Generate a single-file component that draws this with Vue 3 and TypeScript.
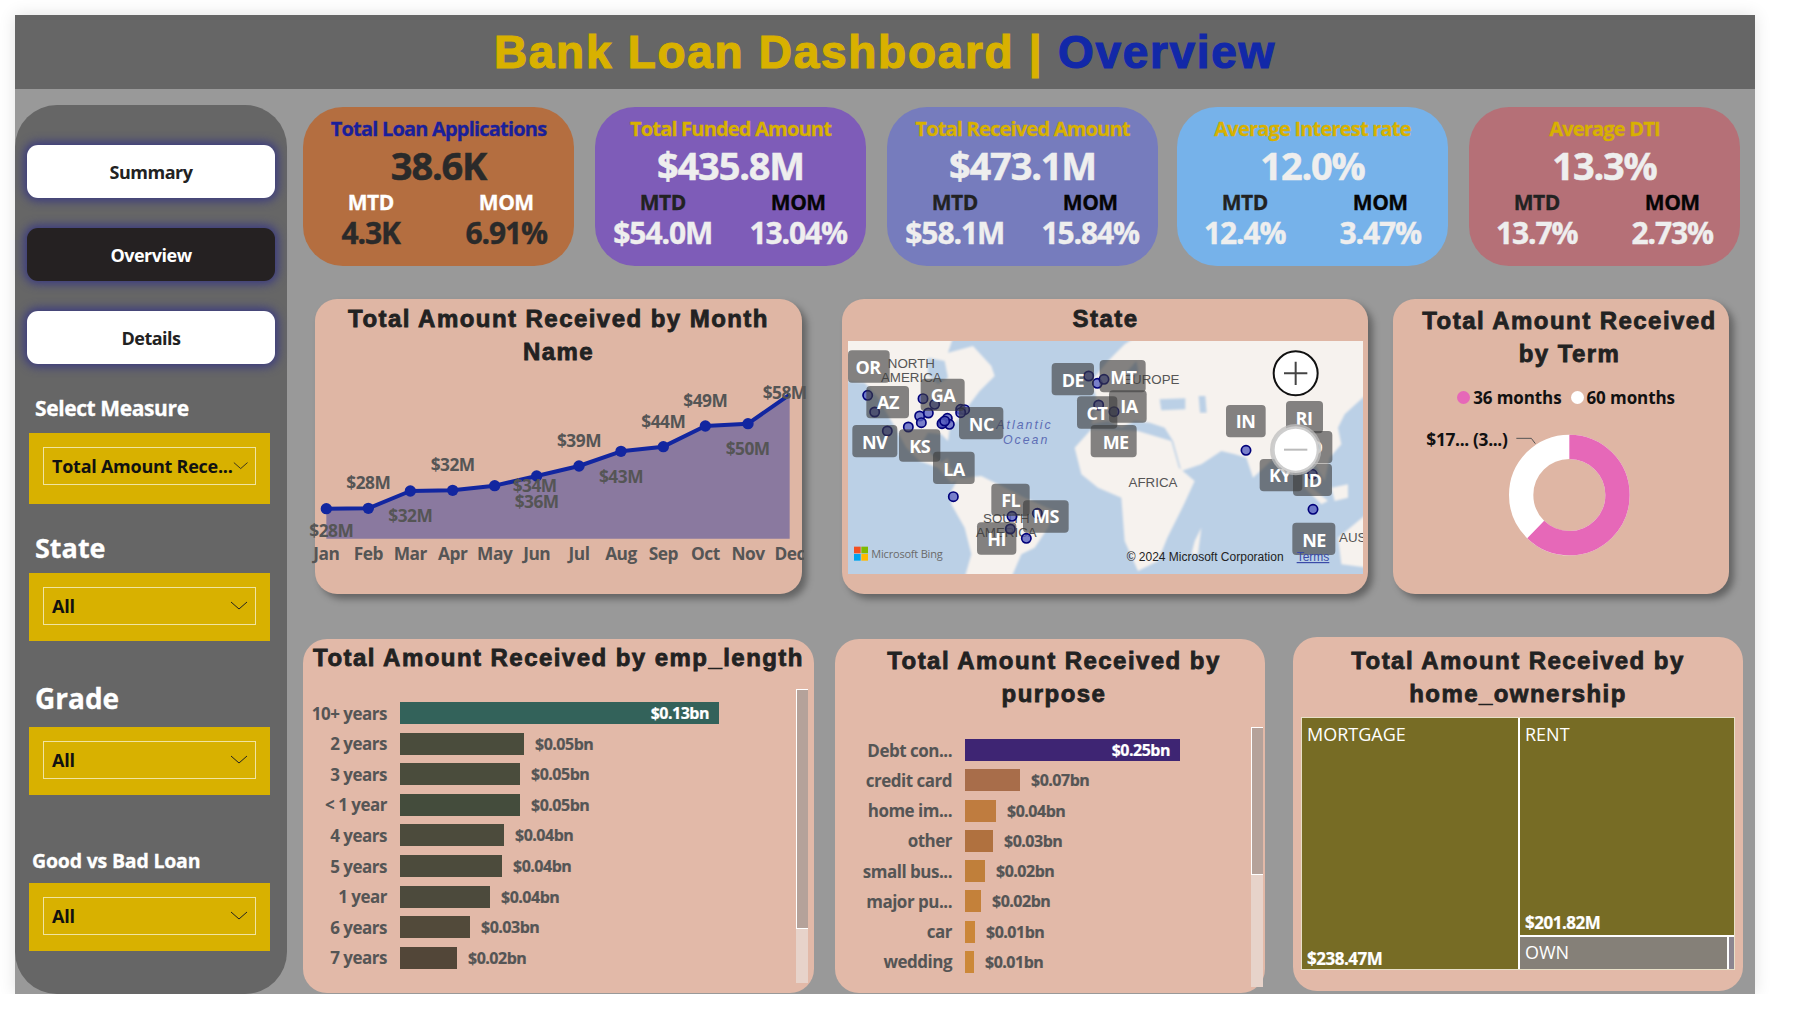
<template>
  <div class="dash">
    <header class="topbar">
      <h1><span class="gold">Bank Loan Dashboard | </span><span class="blue">Overview</span></h1>
    </header>

    <div class="body">
      <aside class="side">
        <button class="nav">Summary</button>
        <button class="nav active">Overview</button>
        <button class="nav">Details</button>

        <div v-for="s in slicers" :key="s.label" class="slicer-wrap" :class="s.cls">
          <div class="slicer-label">{{ s.label }}</div>
          <div class="slicer">
            <div class="slicer-box">
              <span>{{ s.value }}</span>
              <svg width="18" height="10" viewBox="0 0 18 10"><path d="M1 1l8 7 8-7" fill="none" stroke="#222" stroke-width="1" /></svg>
            </div>
          </div>
        </div>
      </aside>

      <main class="content">
        <section class="kpis">
          <div v-for="k in kpis" :key="k.title" class="kpi" :class="k.cls">
            <div class="kpi-title">{{ k.title }}</div>
            <div class="kpi-value">{{ k.value }}</div>
            <div class="kpi-cols">
              <span class="kpi-mtd">MTD</span>
              <span class="kpi-mom">MOM</span>
              <span class="kpi-num">{{ k.mtd }}</span>
              <span class="kpi-num">{{ k.mom }}</span>
            </div>
          </div>
        </section>

        <section class="row-mid">
          <div class="card month-card">
            <h2>Total Amount Received by Month Name</h2>
            <svg class="line-chart" viewBox="46 244 1461 669" width="487" height="223">
              <defs>
                <clipPath id="axisClip"><rect x="0" y="740" width="1513" height="120" /></clipPath>
              </defs>
              <polygon :points="areaPoints" fill="#8a799f" />
              <polyline :points="linePoints" fill="none" stroke="#1226a0" stroke-width="12" stroke-linejoin="round" />
              <circle v-for="p in monthPoints.slice(0, 11)" :key="p.m" :cx="p.x" :cy="p.y" r="17" fill="#1226a0" />
              <text v-for="l in monthLabels" :key="l.x + l.t" :x="l.x" :y="l.y + 17" class="chart-text">{{ l.t }}</text>
              <g clip-path="url(#axisClip)">
                <text v-for="p in monthPoints" :key="p.m" :x="p.x" y="812" class="chart-text">{{ p.m }}</text>
              </g>
            </svg>
          </div>

          <div class="card map-card">
            <h2>State</h2>
            <svg class="map" viewBox="0 0 1545 699" width="515" height="233">
              <defs>
                <filter id="soft" x="-2%" y="-2%" width="104%" height="104%"><feGaussianBlur stdDeviation="2.5" /></filter>
              </defs>
              <rect width="1545" height="699" fill="#bbd0e6" />
              <g fill="#f6f2ee" filter="url(#soft)">
                <path d="M-10 -10L315 -10L300 35L375 15L430 75L440 105L395 150L365 190L335 230L305 265L300 300L280 280L240 275L225 300L250 340L280 365L300 350L305 380L330 400L340 412L310 425L270 380L215 360L175 320L130 240L90 170L50 125L-10 120Z" />
                <path d="M330 412L400 405L450 430L530 470L620 510L600 560L560 620L520 640L490 710L350 710L370 640L350 560L310 490L310 450Z" />
                <path d="M680 320L730 265L870 270L970 300L993 380L1040 420L1008 490L958 590L930 660L870 690L830 600L820 470L750 440L700 400Z" />
                <path d="M745 170L730 120L780 60L830 10L860 -10L1555 -10L1555 160L1490 220L1470 260L1480 310L1445 350L1430 420L1400 370L1370 360L1330 370L1280 350L1215 410L1195 350L1160 340L1120 330L1060 370L1000 390L975 300L950 260L905 245L860 240L820 260L780 240L730 250L745 200Z" />
                <path d="M1380 430L1440 480L1420 490L1370 440Z" />
                <path d="M1450 440L1500 430L1500 470L1460 480Z" />
                <path d="M1470 590L1555 520L1555 680L1480 670Z" />
                <path d="M1040 600L1060 560L1050 640L1030 640Z" />
              </g>
              <g fill="#bbd0e6" filter="url(#soft)">
                <path d="M240 50L290 60L300 110L270 130L240 100Z" />
                <path d="M935 175L1012 172L1012 205L940 208Z" />
                <path d="M1052 165L1072 165L1076 215L1056 215Z" />
                <path d="M835 95L865 60L872 95L850 122Z" />
              </g>

              <text x="190" y="81" class="geo">NORTH</text>
              <text x="190" y="124" class="geo">AMERICA</text>
              <text x="910" y="129" class="geo">EUROPE</text>
              <text x="915" y="439" class="geo">AFRICA</text>
              <text x="475" y="546" class="geo">SOUTH</text>
              <text x="475" y="589" class="geo">AMERICA</text>
              <text x="1473" y="604" class="geo geo-start">AUS</text>
              <text x="445" y="264" class="ocean">Atlantic</text>
              <text x="465" y="309" class="ocean">Ocean</text>

              <circle v-for="(d, i) in dots" :key="i" :cx="d[0]" :cy="d[1]" r="14" fill="#5a62c0" fill-opacity=".8" stroke="#00007a" stroke-width="5" />

              <g v-for="t in tags" :key="t.s">
                <rect :x="t.x" :y="t.y" :width="t.w" height="97" rx="12" fill="#3c3c3c" fill-opacity=".62" />
                <text :x="t.tx" :y="t.ty + 19" class="tag-text">{{ t.s }}</text>
              </g>

              <circle cx="1343" cy="97" r="66" fill="#fff" stroke="#111" stroke-width="6" />
              <path d="M1308 97h70M1343 62v70" stroke="#444" stroke-width="6" fill="none" />
              <circle cx="1343" cy="326" r="70" fill="#fff" stroke="#bdbdbd" stroke-opacity=".75" stroke-width="14" />
              <path d="M1308 326h70" stroke="#bbb" stroke-width="6" fill="none" />

              <rect x="18" y="617" width="20" height="20" fill="#f25022" />
              <rect x="40" y="617" width="20" height="20" fill="#7fba00" />
              <rect x="18" y="639" width="20" height="20" fill="#00a4ef" />
              <rect x="40" y="639" width="20" height="20" fill="#ffb900" />
              <text x="70" y="652" class="bing">Microsoft Bing</text>
              <text x="836" y="660" class="copy">© 2024 Microsoft Corporation</text>
              <text x="1346" y="660" class="terms">Terms</text>
            </svg>
          </div>

          <div class="card term-card">
            <h2>Total Amount Received by Term</h2>
            <div class="legend">
              <span class="dot pink"></span><span>36 months</span>
              <span class="dot white"></span><span>60 months</span>
            </div>
            <svg class="donut" viewBox="40 400 1008 513" width="336" height="171">
              <circle cx="569" cy="616" r="144.5" fill="none" stroke="#fff" stroke-width="73" />
              <circle cx="569" cy="616" r="144.5" fill="none" stroke="#e668b8" stroke-width="73" pathLength="360" stroke-dasharray="224 136" transform="rotate(-90 569 616)" />
              <path d="M410 446h45l12 16" fill="none" stroke="#555" stroke-width="3" />
              <text x="140" y="470" class="donut-label">$17... (3...)</text>
            </svg>
          </div>
        </section>

        <section class="row-bottom">
          <div class="card light emp-card">
            <h2>Total Amount Received by emp_length</h2>
            <div class="bars">
              <div v-for="b in empBars" :key="b.label" class="bar-row">
                <span class="bar-label">{{ b.label }}</span>
                <div class="bar" :style="{ width: b.w + 'px', background: b.c }">
                  <span v-if="b.inside" class="bar-in">{{ b.v }}</span>
                </div>
                <span v-if="!b.inside" class="bar-val">{{ b.v }}</span>
              </div>
            </div>
            <div class="scroll"><div class="thumb"></div></div>
          </div>

          <div class="card light purpose-card">
            <h2>Total Amount Received by purpose</h2>
            <div class="bars">
              <div v-for="b in purposeBars" :key="b.label" class="bar-row">
                <span class="bar-label">{{ b.label }}</span>
                <div class="bar" :style="{ width: b.w + 'px', background: b.c }">
                  <span v-if="b.inside" class="bar-in">{{ b.v }}</span>
                </div>
                <span v-if="!b.inside" class="bar-val">{{ b.v }}</span>
              </div>
            </div>
            <div class="scroll"><div class="thumb"></div></div>
          </div>

          <div class="card light home-card">
            <h2>Total Amount Received by home_ownership</h2>
            <div class="treemap">
              <div class="cell mortgage">
                <span>MORTGAGE</span>
                <b>$238.47M</b>
              </div>
              <div class="tree-right">
                <div class="cell rent">
                  <span>RENT</span>
                  <b>$201.82M</b>
                </div>
                <div class="tree-low">
                  <div class="cell own"><span>OWN</span></div>
                  <div class="cell sliver"></div>
                </div>
              </div>
            </div>
          </div>
        </section>
      </main>
    </div>
  </div>
</template>

<script setup lang="ts">
const slicers = [
  { label: 'Select Measure', value: 'Total Amount Rece...', cls: 'measure' },
  { label: 'State', value: 'All', cls: 'state' },
  { label: 'Grade', value: 'All', cls: 'grade' },
  { label: 'Good vs Bad Loan', value: 'All', cls: 'good' },
]

const kpis = [
  { title: 'Total Loan Applications', value: '38.6K', mtd: '4.3K', mom: '6.91%', cls: 'k1' },
  { title: 'Total Funded Amount', value: '$435.8M', mtd: '$54.0M', mom: '13.04%', cls: 'k2' },
  { title: 'Total Received Amount', value: '$473.1M', mtd: '$58.1M', mom: '15.84%', cls: 'k3' },
  { title: 'Average Interest rate', value: '12.0%', mtd: '12.4%', mom: '3.47%', cls: 'k4' },
  { title: 'Average DTI', value: '13.3%', mtd: '13.7%', mom: '2.73%', cls: 'k5' },
]

const monthPoints = [
  { m: 'Jan', x: 80, y: 657 },
  { m: 'Feb', x: 206, y: 656 },
  { m: 'Mar', x: 332, y: 604 },
  { m: 'Apr', x: 459, y: 602 },
  { m: 'May', x: 585, y: 588 },
  { m: 'Jun', x: 711, y: 559 },
  { m: 'Jul', x: 838, y: 529 },
  { m: 'Aug', x: 964, y: 485 },
  { m: 'Sep', x: 1091, y: 471 },
  { m: 'Oct', x: 1217, y: 409 },
  { m: 'Nov', x: 1345, y: 402 },
  { m: 'Dec', x: 1470, y: 315 },
]
const linePoints = monthPoints.map(p => `${p.x},${p.y}`).join(' ')
const areaPoints = `80,747 ${linePoints} 1470,747`

const monthLabels = [
  { t: '$28M', x: 95, y: 724 },
  { t: '$28M', x: 206, y: 580 },
  { t: '$32M', x: 332, y: 679 },
  { t: '$32M', x: 459, y: 526 },
  { t: '$34M', x: 705, y: 589 },
  { t: '$36M', x: 711, y: 637 },
  { t: '$39M', x: 838, y: 455 },
  { t: '$43M', x: 964, y: 562 },
  { t: '$44M', x: 1091, y: 397 },
  { t: '$49M', x: 1217, y: 334 },
  { t: '$50M', x: 1344, y: 478 },
  { t: '$58M', x: 1455, y: 311 },
]

const dots: [number, number][] = [
  [59, 163], [80, 213], [225, 173], [260, 190], [215, 225], [241, 216], [220, 245], [181, 258],
  [118, 270], [298, 232], [285, 245], [304, 250], [282, 248], [290, 240], [338, 205], [350, 206],
  [338, 215], [316, 467], [492, 526], [568, 517], [487, 564], [535, 592], [722, 105], [748, 127],
  [768, 115], [752, 192], [798, 212], [1194, 328], [1393, 400], [1395, 505],
]

const tags = [
  { s: 'OR', x: 0, y: 28, w: 125, tx: 60, ty: 80 },
  { s: 'AZ', x: 55, y: 135, w: 128, tx: 120, ty: 185 },
  { s: 'GA', x: 218, y: 113, w: 132, tx: 285, ty: 165 },
  { s: 'NC', x: 333, y: 198, w: 133, tx: 400, ty: 250 },
  { s: 'NV', x: 13, y: 252, w: 135, tx: 80, ty: 305 },
  { s: 'KS', x: 153, y: 265, w: 124, tx: 215, ty: 318 },
  { s: 'LA', x: 255, y: 332, w: 125, tx: 318, ty: 385 },
  { s: 'FL', x: 430, y: 428, w: 115, tx: 488, ty: 480 },
  { s: 'MS', x: 525, y: 478, w: 137, tx: 594, ty: 528 },
  { s: 'HI', x: 387, y: 544, w: 118, tx: 446, ty: 597 },
  { s: 'DE', x: 611, y: 66, w: 127, tx: 675, ty: 118 },
  { s: 'MT', x: 755, y: 57, w: 138, tx: 826, ty: 110 },
  { s: 'CT', x: 687, y: 166, w: 121, tx: 747, ty: 218 },
  { s: 'IA', x: 783, y: 148, w: 113, tx: 843, ty: 198 },
  { s: 'ME', x: 728, y: 252, w: 138, tx: 803, ty: 305 },
  { s: 'IN', x: 1134, y: 192, w: 119, tx: 1193, ty: 243 },
  { s: 'RI', x: 1314, y: 180, w: 111, tx: 1368, ty: 232 },
  { s: 'MD', x: 1370, y: 270, w: 83, tx: 1380, ty: 320 },
  { s: 'KY', x: 1235, y: 354, w: 128, tx: 1296, ty: 405 },
  { s: 'ID', x: 1335, y: 368, w: 117, tx: 1393, ty: 420 },
  { s: 'NE', x: 1333, y: 545, w: 129, tx: 1398, ty: 598 },
]

const empBars = [
  { label: '10+ years', w: 319, c: '#33625a', v: '$0.13bn', inside: true },
  { label: '2 years', w: 124, c: '#4a4c3c', v: '$0.05bn' },
  { label: '3 years', w: 120, c: '#4a4c3c', v: '$0.05bn' },
  { label: '< 1 year', w: 120, c: '#444c3c', v: '$0.05bn' },
  { label: '4 years', w: 104, c: '#4c4b3c', v: '$0.04bn' },
  { label: '5 years', w: 102, c: '#4c4b3c', v: '$0.04bn' },
  { label: '1 year', w: 90, c: '#4c4a3c', v: '$0.04bn' },
  { label: '6 years', w: 70, c: '#524a3a', v: '$0.03bn' },
  { label: '7 years', w: 57, c: '#524638', v: '$0.02bn' },
]

const purposeBars = [
  { label: 'Debt con...', w: 215, c: '#3e2573', v: '$0.25bn', inside: true },
  { label: 'credit card', w: 55, c: '#a86d4a', v: '$0.07bn' },
  { label: 'home im...', w: 31, c: '#bf7c3f', v: '$0.04bn' },
  { label: 'other', w: 28, c: '#b0713f', v: '$0.03bn' },
  { label: 'small bus...', w: 20, c: '#c07f3a', v: '$0.02bn' },
  { label: 'major pu...', w: 16, c: '#c4813a', v: '$0.02bn' },
  { label: 'car', w: 10, c: '#cb8638', v: '$0.01bn' },
  { label: 'wedding', w: 9, c: '#cc8838', v: '$0.01bn' },
]
</script>

<style>
html, body { background: #fff; }
</style>

<style scoped>
.dash {
  position: relative;
  margin: 15px 0 0 15px;
  width: 1740px;
  height: 979px;
  background: #999;
  box-shadow: 0 0 16px rgba(0, 0, 0, .12);
  font-family: "Open Sans", "Noto Sans", sans-serif;
  color: #222;
}

.topbar {
  height: 74px;
  background: #666;
  display: flex;
  align-items: center;
  justify-content: center;
}
.topbar h1 {
  margin: 0;
  font: 700 46px/1 "Liberation Sans", sans-serif;
  -webkit-text-stroke: 1.2px currentColor;
  letter-spacing: 1.7px;
  white-space: pre;
}
.gold { color: #d8b100; }
.blue { color: #1228a8; }

.body { display: flex; }

.side {
  width: 272px;
  height: 889px;
  margin-top: 16px;
  padding-top: 40px;
  box-sizing: border-box;
  background: #666;
  border-radius: 42px;
  flex: none;
}
.nav {
  display: block;
  width: 248px;
  height: 53px;
  margin: 0 0 30px 12px;
  border: 0;
  border-radius: 11px;
  background: #fff;
  color: #222;
  font: 700 18px "Open Sans", sans-serif;
  letter-spacing: -.5px;
  box-shadow: 0 0 10px 3px #3a3a80;
}
.nav.active { background: #252122; color: #fff; }

.slicer-label {
  color: #fff;
  font-weight: 700;
  padding-left: 20px;
  line-height: 40px;
  -webkit-text-stroke: .3px #fff;
}
.slicer {
  margin-left: 14px;
  width: 241px;
  height: 68px;
  padding: 14px;
  box-sizing: border-box;
  background: #d8b100;
}
.slicer-box {
  height: 38px;
  padding: 0 7px 0 8px;
  border: 1px solid #f0e4a0;
  box-sizing: border-box;
  display: flex;
  align-items: center;
  justify-content: space-between;
  color: #111;
  font-size: 18px;
  font-weight: 700;
  letter-spacing: -.25px;
  white-space: nowrap;
}
.measure .slicer-label { font-size: 21px; line-height: 28px; letter-spacing: -.4px; margin-bottom: 11px; }
.measure .slicer { height: 71px; }
.state { margin-top: 24px; }
.state .slicer-label { font-size: 27px; margin-bottom: 5px; }
.grade { margin-top: 37px; }
.grade .slicer-label { font-size: 28px; margin-bottom: 9px; }
.good { margin-top: 52px; }
.good .slicer-label { font-size: 19.5px; line-height: 28px; padding-left: 17px; margin-bottom: 8px; letter-spacing: -.2px; }

.content { flex: none; width: 1468px; }

.kpis {
  display: flex;
  gap: 21px;
  margin: 18px 0 0 16px;
}
.kpi {
  width: 271px;
  height: 159px;
  border-radius: 40px;
  text-align: center;
  color: #eee;
  overflow: hidden;
}
.kpi-title {
  font-size: 20px;
  font-weight: 700;
  line-height: 28px;
  margin-top: 8px;
  letter-spacing: -.8px;
  -webkit-text-stroke: .3px currentColor;
  color: #d8b100;
  white-space: nowrap;
}
.kpi-value {
  font-size: 38px;
  font-weight: 700;
  line-height: 44px;
  margin-top: 0;
  letter-spacing: -1.2px;
  -webkit-text-stroke: .5px currentColor;
}
.kpi-cols {
  display: grid;
  grid-template-columns: 1fr 1fr;
  margin-top: 2px;
}
.kpi-mtd, .kpi-mom {
  font-size: 21px;
  font-weight: 700;
  line-height: 26px;
  letter-spacing: -.5px;
  -webkit-text-stroke: .3px currentColor;
}
.kpi-mtd { color: #222; }
.kpi-mom { color: #050505; }
.kpi-num {
  font-size: 30px;
  font-weight: 700;
  line-height: 36px;
  margin-top: 0;
  letter-spacing: -1.1px;
  -webkit-text-stroke: .4px currentColor;
}
.k1 { background: #b46e40; color: #2a2a2a; }
.k1 .kpi-title { color: #1a1f9a; }
.k1 .kpi-mtd, .k1 .kpi-mom { color: #fff; }
.k2 { background: #7e5cb8; }
.k3 { background: #767cbd; }
.k4 { background: #76b2ea; margin-left: -2px; }
.k5 { background: #b57077; }

.card {
  position: relative;
  box-sizing: border-box;
  border-radius: 22px;
  background: #dfb6a4;
  box-shadow: 5px 5px 7px rgba(0, 0, 0, .35);
}
.card.light { background: #e2b9a8; box-shadow: none; border-radius: 24px; }
.card h2 {
  margin: 0;
  font: 700 24px/33px "Liberation Sans", sans-serif;
  letter-spacing: 1.45px;
  -webkit-text-stroke: .8px currentColor;
  text-align: center;
  color: #222;
}

.row-mid {
  display: flex;
  margin: 33px 0 0 28px;
}
.month-card { width: 487px; height: 295px; padding-top: 3px; margin-right: 40px; }
.month-card h2 { padding: 0 20px; }
.line-chart { display: block; margin-top: 3px; overflow: visible; }
.chart-text {
  font: 700 52px "Open Sans", sans-serif;
  fill: #555;
  text-anchor: middle;
  letter-spacing: -1.5px;
}

.map-card { width: 526px; height: 295px; padding: 3px 5px 0 6px; margin-right: 25px; }
.map-card h2 { height: 39px; }
.map { display: block; }
.geo { font: 400 40px "Liberation Sans", sans-serif; fill: #555; text-anchor: middle; }
.geo-start { text-anchor: start; }
.ocean { font: italic 400 37px "Liberation Sans", sans-serif; fill: #5d6db5; letter-spacing: 6px; }
.tag-text { font: 700 54px "Open Sans", sans-serif; fill: #fff; text-anchor: middle; letter-spacing: -1.5px; }
.bing { font: 400 33px "Open Sans", sans-serif; fill: #6a6a6a; letter-spacing: -.6px; }
.copy { font: 400 36px "Liberation Sans", sans-serif; fill: #222; }
.terms { font: 400 36px "Liberation Sans", sans-serif; fill: #3a4aa8; text-decoration: underline; }

.term-card { width: 336px; height: 295px; padding-top: 5px; }
.term-card h2 { padding-left: 17px; }
.legend {
  display: flex;
  align-items: center;
  justify-content: center;
  gap: 3px;
  height: 24px;
  margin: 15px 0 14px;
  padding-left: 10px;
  font-size: 17px;
  font-weight: 700;
  letter-spacing: -.1px;
  color: #111;
}
.dot { width: 13px; height: 13px; border-radius: 50%; }
.dot.white { background: #fff; margin-left: 6px; }
.dot.pink { background: #e668b8; }
.donut { display: block; }
.donut-label { font: 700 52px "Open Sans", sans-serif; fill: #111; letter-spacing: -1px; }

.row-bottom {
  display: flex;
  align-items: flex-start;
  margin: 45px 0 0 16px;
}
.emp-card { width: 511px; height: 354px; padding-top: 2px; margin-right: 21px; white-space: nowrap; }
.emp-card .bars { margin-top: 24px; --label: 84px; --pitch: 30.55px; }
.purpose-card { width: 430px; height: 354px; padding-top: 5px; margin-right: 28px; }
.purpose-card h2 { padding: 0 25px 0 33px; }
.purpose-card .bars { margin-top: 25px; --label: 117px; --pitch: 30.25px; }

.bar-row {
  display: flex;
  align-items: center;
  height: var(--pitch);
}
.bar-label {
  flex: none;
  width: var(--label);
  margin-right: 13px;
  text-align: right;
  font-size: 17px;
  font-weight: 700;
  letter-spacing: -.5px;
  color: #555;
  white-space: nowrap;
}
.bar {
  flex: none;
  height: 22px;
  display: flex;
  align-items: center;
  justify-content: flex-end;
}
.bar-in, .bar-val {
  font-size: 16px;
  font-weight: 700;
  letter-spacing: -.5px;
  -webkit-text-stroke: .2px currentColor;
}
.bar-in { color: #fff; padding-right: 10px; }
.bar-val { color: #555; margin-left: 11px; }

.scroll {
  position: absolute;
  top: 50px;
  left: 493px;
  width: 12px;
  height: 294px;
  background: #e7d3ca;
}
.thumb {
  height: 240px;
  box-sizing: border-box;
  background: #b5a29a;
  border: 1px solid #fff;
  border-right: 0;
}
.purpose-card .scroll { top: 88px; left: 416px; height: 260px; }
.purpose-card .thumb { height: 148px; }

.home-card {
  width: 450px;
  height: 354px;
  margin-top: -2px;
  padding: 7px 0 0;
}
.treemap {
  display: flex;
  width: 434px;
  height: 253px;
  margin: 7px 0 0 8px;
  border: 1px solid #e8e0c8;
  box-sizing: border-box;
  color: #fff;
}
.cell {
  box-sizing: border-box;
  background: #776c25;
  padding: 4px 5px;
  display: flex;
  flex-direction: column;
  justify-content: space-between;
  font-size: 18px;
  line-height: 24px;
}
.cell b { font-size: 17px; font-weight: 700; letter-spacing: -.5px; -webkit-text-stroke: .2px #fff; }
.mortgage { width: 218px; border-right: 2px solid #fff; padding-bottom: 0; }
.mortgage b { margin-bottom: -2px; }
.tree-right { flex: 1; display: flex; flex-direction: column; }
.rent { height: 217px; padding-bottom: 0; }
.tree-low { flex: 1; display: flex; border-top: 2px solid #fff; }
.own { flex: 1; background: #858078; border-right: 2px solid #fff; padding-top: 3px; }
.sliver { width: 5px; padding: 0; background: #8b8590; }
</style>
